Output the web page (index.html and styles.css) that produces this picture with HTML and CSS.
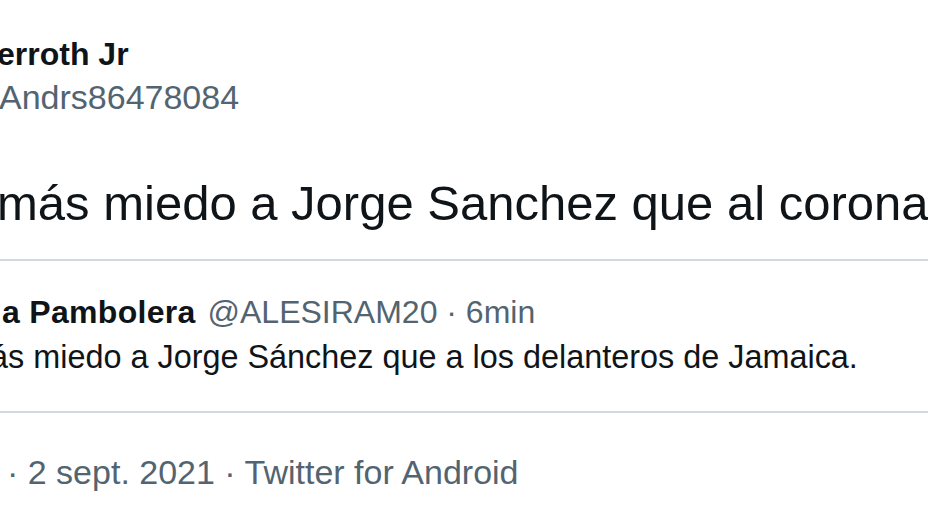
FILE: index.html
```html
<!DOCTYPE html>
<html lang="es">
<head>
    <meta charset="UTF-8">
    <meta name="viewport" content="width=device-width, initial-scale=1.0">
    <title>Tweet</title>
    <link rel="stylesheet" href="styles.css">
</head>
<body>
    <div class="tweet">
        <div class="author">
            <div class="name">erroth Jr</div>
            <div class="handle">Andrs86478084</div>
        </div>

        <div class="text">más miedo a Jorge Sanchez que al coronavirus</div>

        <!-- Quoted tweet -->
        <div class="quote">
            <div class="quote-head">
                <span class="quote-name">a Pambolera</span>
                <span class="quote-meta">@ALESIRAM20 · 6min</span>
            </div>
            <div class="quote-text">ás miedo a Jorge Sánchez que a los delanteros de Jamaica.</div>
        </div>

        <div class="meta">· 2 sept. 2021 · Twitter for Android</div>
    </div>
</body>
</html>
```

FILE: styles.css
```css
body {
    margin: 0;
    padding: 0;
    background-color: #ffffff;
    color: #0f1419;
    font-family: 'Liberation Sans', Arial, sans-serif;
    overflow: hidden;
}

.tweet {
    padding-top: 33px;
    white-space: nowrap;
}

.name {
    font-size: 32px;
    font-weight: 700;
    line-height: 43px;
    margin-left: -3px;
}

.handle {
    font-size: 34px;
    line-height: 43px;
    color: #536471;
    margin-left: -1px;
}

.text {
    font-size: 49px;
    line-height: 60px;
    margin-top: 54px;
    margin-left: -3px;
}

.quote {
    margin: 26px -40px 0 -40px;
    padding: 28px 0 32px 40px;
    border: 2px solid #cfd9de;
    border-radius: 32px;
}

.quote-head {
    font-size: 32px;
    line-height: 46px;
}

.quote-name {
    font-weight: 700;
    letter-spacing: 0.3px;
}

.quote-meta {
    color: #536471;
    margin-left: 3px;
}

.quote-text {
    font-size: 32.4px;
    line-height: 44px;
    margin-left: -12px;
}

.meta {
    font-size: 34px;
    line-height: 44px;
    color: #536471;
    margin-top: 37px;
    margin-left: 7px;
}
```
